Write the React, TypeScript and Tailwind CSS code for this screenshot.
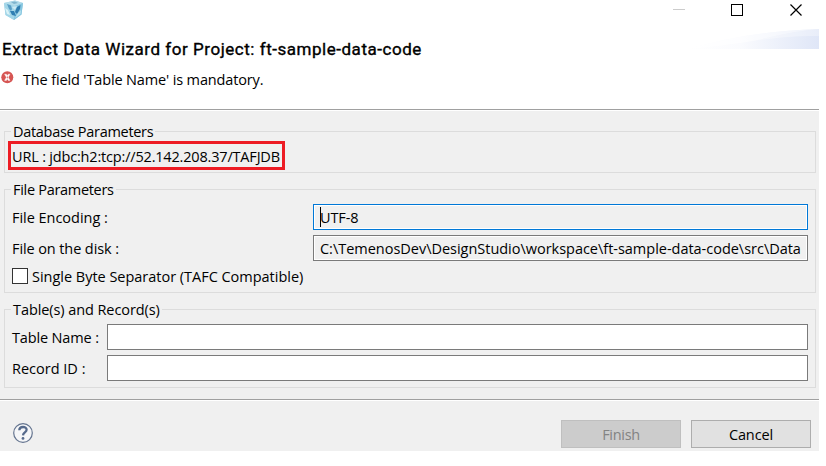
import type { ReactNode } from "react";

function AppCube() {
  return (
    <svg className="ml-[3px] h-[20px] w-[20px]" viewBox="0 0 20 20">
      <polygon points="1,3 12,0.5 20,3 18.5,14.5 11,20 2.5,15" fill="#a6d5e7" />
      <polygon points="1,3 12,0.5 20,3 12,6" fill="#b4dcea" />
      <polygon points="1,3 12,6 11,20 2.5,15" fill="#a3d6e8" />
      <polygon points="12,6 20,3 18.5,14.5 11,20" fill="#86c6e0" />
      <polygon points="4,4 8,5.5 9,9 8,11 6,9" fill="#5a9fc6" />
      <polygon points="7,11 11,11 13,16 9,15" fill="#2f7fb3" />
      <polygon points="12,12 14,7 17.5,5 17,9 14,14" fill="#2f7cae" />
      <polygon points="2,8 5,10 7,15 4,14" fill="#d9f2f7" />
      <polygon points="9,7 14,6 12,10" fill="#cdeaf3" />
      <polygon points="8,2 12,1.5 15,3 11,4" fill="#7fb4cd" />
      <polygon points="15,13 18,10 17.5,14 12,18" fill="#b9e2ee" />
    </svg>
  );
}

function ErrorIcon() {
  return (
    <svg className="mt-[6px] ml-px h-[13px] w-[13px]" viewBox="0 0 13 13">
      <circle cx="6.3" cy="6.3" r="6" fill="#d65553" />
      <path d="M3.6 3.2h1.8L9 9.4H7.2zM9 3.2H7.2L3.6 9.4h1.8z" fill="#fff" stroke="#fff" strokeWidth="0.4" />
    </svg>
  );
}

function Group({ title, titleClass, className, children }: { title: string; titleClass: string; className: string; children: ReactNode }) {
  return (
    <div className={`ml-[4px] w-[812px] border border-[#dcdcdc] ${className}`}>
      <div className="-mt-[10px] flex h-[19px]">
        <span className={`ml-[6px] bg-[#f0f0f0] pr-[2px] pl-[2px] ${titleClass}`}>{title}</span>
      </div>
      {children}
    </div>
  );
}

export default function App() {
  return (
    <div className="h-[466px] w-[826px] overflow-hidden bg-white font-['Open_Sans',sans-serif] text-[14.5px] leading-[20px] whitespace-nowrap text-black">
      <div className="flex h-[451px] w-[819px] flex-col bg-[#f0f0f0]">
        <header className="h-[109px] bg-white">
          <div className="flex h-[29px] justify-between">
            <AppCube />
            <svg className="h-[29px] w-[146px]" viewBox="0 0 146 29" shapeRendering="crispEdges">
              <path d="M0 9.5h12" stroke="#ccc" />
              <rect x="58.5" y="4.5" width="11" height="11" fill="none" stroke="#000" />
              <path d="M117.5 4.5l11 11M128.5 4.5l-11 11" stroke="#000" strokeWidth="1.2" shapeRendering="auto" />
            </svg>
          </div>
          <div className="flex h-[39px] justify-between">
            <h1 className="mt-[10px] ml-[2px] font-['Roboto',sans-serif] text-[17px] leading-[20px] font-normal tracking-[0.53px] [-webkit-text-stroke:0.35px_black]">
              Extract Data Wizard for Project: ft-sample-data-code
            </h1>
            <svg className="h-[20px] w-[131px]" viewBox="0 0 131 20">
              <defs>
                <linearGradient id="swoosh" x1="0" x2="1">
                  <stop offset="0" stopColor="#fff" />
                  <stop offset="0.4" stopColor="#fafbfe" />
                  <stop offset="1" stopColor="#dfe6f7" />
                </linearGradient>
              </defs>
              <path d="M0 20C35 10 75 2 131 0V20z" fill="url(#swoosh)" />
              <path d="M0 20C35 10 75 2 131 0C100 3 85 8 65 12C45 15 20 19 0 20z" fill="#fff" opacity="0.5" />
              <path d="M65 12C85 8 100 3 131 0V7C105 7 85 9 65 12z" fill="#fff" opacity="0.3" />
            </svg>
          </div>
          <div className="flex">
            <div className="-mt-[3px]"><ErrorIcon /></div>
            <span className="mt-[2px] ml-[9px] tracking-[-0.14px]">The field 'Table Name' is mandatory.</span>
          </div>
        </header>
        <div className="h-[2px] shrink-0 border-t border-[#a0a0a0] bg-white" />

        <Group title="Database Parameters" titleClass="tracking-[-0.3px]" className="mt-[20px] h-[42px] shrink-0">
          <div className="ml-[3px] flex h-[29px] w-[277px] items-center border-[3px] border-[#ed1c24] pt-[2px] pl-px">
            <span className="tracking-[-0.18px]">URL : jdbc:h2:tcp://52.142.208.37/TAFJDB</span>
          </div>
        </Group>

        <Group title="File Parameters" titleClass="tracking-[-0.3px]" className="mt-[16px] h-[104px] shrink-0">
          <div className="mt-[5px] flex h-[26px] items-center pr-[7px] pl-[7px]">
            <span className="w-[301px] pt-[2px] tracking-[-0.03px]">File Encoding :</span>
            <div className="flex h-[26px] w-[495px] items-center border border-[#0078d7] pl-[6px] outline-1 -outline-offset-2 outline-white">
              <span className="h-[20px] w-px bg-black" />
              <span className="-ml-px pt-[2px] tracking-[-0.1px]">UTF-8</span>
            </div>
          </div>
          <div className="mt-[5px] flex h-[26px] items-center pr-[7px] pl-[7px]">
            <span className="w-[301px] pt-[2px] tracking-[-0.1px]">File on the disk :</span>
            <div className="flex h-[26px] w-[495px] items-center border border-[#7a7a7a] pl-[6px] outline-1 -outline-offset-2 outline-white">
              <span className="pt-[2px] tracking-[-0.02px]">C:\TemenosDev\DesignStudio\workspace\ft-sample-data-code\src\Data</span>
            </div>
          </div>
          <div className="mt-[5px] flex h-[20px] items-center pl-[7px]">
            <span className="h-[16px] w-[16px] border border-[#333] bg-white" />
            <span className="ml-[4px] pt-[2px] tracking-[-0.02px]">Single Byte Separator (TAFC Compatible)</span>
          </div>
        </Group>

        <Group title="Table(s) and Record(s)" titleClass="tracking-[-0.08px]" className="mt-[16px] h-[79px] shrink-0">
          <div className="mt-[5px] flex h-[26px] items-center pl-[7px]">
            <span className="w-[95px] pt-[2px] tracking-[-0.15px]">Table Name :</span>
            <div className="h-[26px] w-[701px] border border-[#7a7a7a] bg-white" />
          </div>
          <div className="mt-[5px] flex h-[26px] items-center pl-[7px]">
            <span className="w-[95px] pt-[2px] tracking-[0px]">Record ID :</span>
            <div className="h-[26px] w-[701px] border border-[#7a7a7a] bg-white" />
          </div>
        </Group>

        <div className="mt-[11px] h-[2px] shrink-0 border-t border-[#a0a0a0] bg-white" />
        <footer className="flex h-[50px] items-start pt-[19px] pl-[13px]">
          <svg className="mt-[3px] h-[20px] w-[20px]" viewBox="0 0 20 20">
            <circle cx="10" cy="10" r="9.3" fill="#f5f6f8" stroke="#64748f" strokeWidth="1.2" />
            <path d="M6.3 7.2C6.4 3 13.6 3 13.6 6.8c0 2.6-3.4 2.7-3.6 5.5" fill="none" stroke="#566a8c" strokeWidth="2.3" />
            <circle cx="10" cy="15.4" r="1.4" fill="#566a8c" />
          </svg>
          <button className="ml-[528px] h-[28px] w-[120px] border border-[#bfbfbf] bg-[#ccc] pt-[2px] tracking-[-0.3px] text-[#838383]">Finish</button>
          <button className="ml-[10px] h-[28px] w-[120px] border border-[#adadad] bg-[#e1e1e1] pt-[2px] tracking-[-0.1px]">Cancel</button>
        </footer>
      </div>
    </div>
  );
}
